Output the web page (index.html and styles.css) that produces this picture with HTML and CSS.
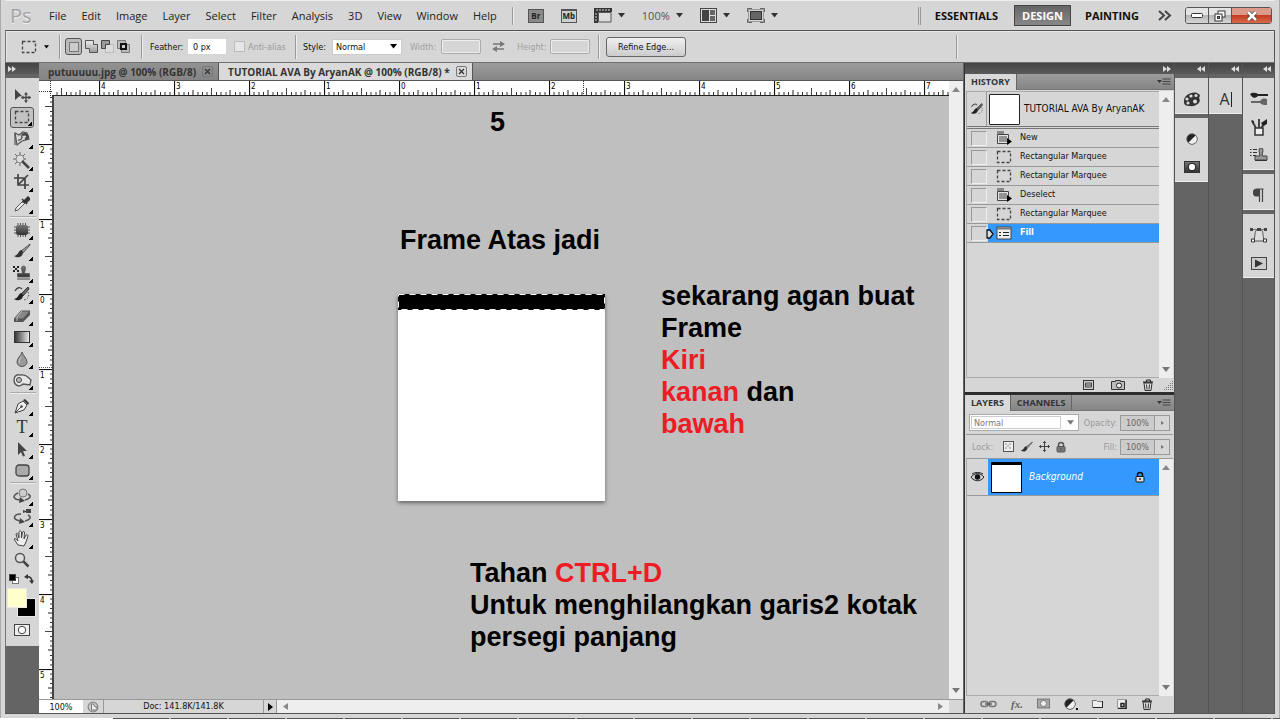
FILE: index.html
```html
<!DOCTYPE html>
<html lang="en">
<head>
<meta charset="utf-8">
<title>TUTORIAL AVA By AryanAK</title>
<link rel="stylesheet" href="styles.css">
</head>
<body>
<svg class="defs" aria-hidden="true">
  <defs>
    <linearGradient id="gdark" x1="0" y1="0" x2="0" y2="1"><stop offset="0" stop-color="#777"/><stop offset="1" stop-color="#333"/></linearGradient>
    <linearGradient id="glight" x1="0" y1="0" x2="0" y2="1"><stop offset="0" stop-color="#eee"/><stop offset="1" stop-color="#999"/></linearGradient>
    <linearGradient id="gside" x1="0" y1="0" x2="1" y2="0"><stop offset="0" stop-color="#333"/><stop offset="1" stop-color="#eee"/></linearGradient>
    <symbol id="marquee" viewBox="0 0 16 14"><rect x="1.500" y="1.500" width="13" height="11" fill="none" stroke="#444" stroke-dasharray="3 2" stroke-width="1.300"/></symbol>
    <symbol id="caret" viewBox="0 0 7 5"><path d="M0 0h7L3.500 4.500z" fill="currentColor"/></symbol>
    <symbol id="menu" viewBox="0 0 14 8"><path d="M0 2h5L2.500 5z" fill="#333"/><path d="M5.500 1h8M5.500 3.500h8M5.500 6h8" stroke="#444" stroke-width="1"/></symbol>
    <symbol id="right" viewBox="0 0 8 6"><path d="M0 0l4 3-4 3zM4 0l4 3-4 3z" fill="#ddd"/></symbol>
    <symbol id="left" viewBox="0 0 8 6"><path d="M4 0L0 3l4 3zM8 0L4 3l4 3z" fill="#ddd"/></symbol>
    <symbol id="brush" viewBox="0 0 18 16"><path d="M17 1L8 8l2 2 7-8z" fill="#999" stroke="#444" stroke-width=".8"/><path d="M9 7c-4 0-3 5-8 6 3 2 8 2 9-3z" fill="#333"/></symbol>
    <symbol id="histbrush" viewBox="0 0 18 16"><path d="M15 1L8 8l2 2 6-7z" fill="#666" stroke="#333"/><path d="M9 7c-4 0-3 5-8 6 3 2 8 2 9-3z" fill="#222"/><path d="M2 5c2-4 5-4 7-2" fill="none" stroke="#444" stroke-width="1.300"/><path d="M15 6c2 4 0 7-4 8" fill="none" stroke="#555" stroke-dasharray="1.500 1.500"/></symbol>
    <symbol id="trash" viewBox="0 0 12 12"><path d="M2 4h8l-1 7.500H3z" fill="#ddd" stroke="#333"/><path d="M1 3.200h10M4 3l1-2h3l1 2" fill="none" stroke="#222" stroke-width="1.200"/><path d="M4.500 5.500l.5 5M7.500 5.500l-.5 5" stroke="#333"/></symbol>
    <symbol id="lock" viewBox="0 0 10 12"><path d="M2.500 6V4a2.500 2.500 0 015 0v2" fill="none" stroke="currentColor" stroke-width="1.500"/><rect x="1" y="5.500" width="8" height="5.500" rx="1" fill="var(--body)" stroke="currentColor"/><path d="M5 7v2" stroke="currentColor" stroke-width="1.300"/></symbol>
    <symbol id="quick" viewBox="0 0 16 12"><rect x=".5" y=".5" width="15" height="11" fill="#eee" stroke="#444"/><circle cx="8" cy="6" r="3.700" fill="#fff" stroke="#444"/></symbol>
    <symbol id="mask" viewBox="0 0 16 12"><rect x=".5" y=".5" width="15" height="11" fill="url(#gdark)" stroke="#333"/><circle cx="8" cy="6" r="3.800" fill="#fff" stroke="#111"/></symbol>
    <symbol id="adjust" viewBox="0 0 12 12"><circle cx="6" cy="6" r="5.200" fill="#222" stroke="#555"/><path d="M9.500 2.500a4.900 4.900 0 01-7 7z" fill="#eee"/></symbol>
    <symbol id="command" viewBox="0 0 16 14"><path d="M1.500 3.500h11v9h-11z" fill="#e4e4e4" stroke="#444"/><path d="M1 0h7v3H1z" fill="#888"/><path d="M3 6h8M3 8h8M3 10h8" stroke="#444"/><path d="M11 7v7l5-3.500z" fill="#000"/></symbol>
    <symbol id="up" viewBox="0 0 8 5"><path d="M0 5h8L4 0z" fill="#888"/></symbol>
    <symbol id="down" viewBox="0 0 8 5"><path d="M0 0h8L4 5z" fill="#777"/></symbol>
  </defs>
</svg>

<div class="app">
  <header class="menubar">
    <div class="logo">Ps</div>
    <nav class="menus">
      <button>File</button><button>Edit</button><button>Image</button><button>Layer</button><button>Select</button><button>Filter</button><button>Analysis</button><button>3D</button><button>View</button><button>Window</button><button>Help</button>
    </nav>
    <span class="divider tall"></span>
    <div class="launch">
      <button class="badge" aria-label="Bridge">Br</button>
      <button class="badge mb" aria-label="Mini Bridge">Mb</button>
      <button aria-label="View extras"><svg width="18" height="15" viewBox="0 0 18 15"><path d="M0 0h18v4H4v11H0z" fill="#333"/><path d="M3 1v2M6 1v2M9 1v2M12 1v2M15 1v2M1 6h2M1 9h2M1 12h2" stroke="#ddd"/><path d="M4.500 4.500h12.500v9.500H4.500z" fill="#ddd" stroke="#555"/></svg><svg class="caret"><use href="#caret"/></svg></button>
      <button class="zoomlevel" aria-label="Zoom level"><span>100%</span><svg class="caret"><use href="#caret"/></svg></button>
      <button aria-label="Arrange documents"><svg width="17" height="15" viewBox="0 0 17 15"><rect x=".5" y=".5" width="16" height="14" fill="#ddd" stroke="#444"/><path d="M2 2h7v11H2z" fill="#444"/><path d="M10 2h5v5h-5zM10 8h5v5h-5z" fill="#666"/></svg><svg class="caret"><use href="#caret"/></svg></button>
      <button aria-label="Screen mode"><svg width="18" height="15" viewBox="0 0 18 15"><rect x="3.500" y="3.500" width="11" height="8" fill="#666" stroke="#333"/><path d="M1 4V1h4M13 1h4v3M1 11v3h4M13 14h4v-3" fill="none" stroke="#444" stroke-width="1.500"/><rect x="1.500" y="1.500" width="15" height="12" fill="none" stroke="#999"/></svg><svg class="caret"><use href="#caret"/></svg></button>
    </div>
    <div class="workspaces">
      <button>ESSENTIALS</button><button class="on">DESIGN</button><button>PAINTING</button>
      <button class="more" aria-label="More workspaces"><svg width="14" height="11" viewBox="0 0 14 11"><path d="M1 1l5 4.500L1 10M7 1l5 4.500L7 10" fill="none" stroke="#444" stroke-width="2"/></svg></button>
    </div>
    <div class="winctl">
      <button aria-label="Minimize"><svg width="12" height="6" viewBox="0 0 12 6"><rect x=".5" y=".5" width="11" height="4" rx="1" fill="#fff" stroke="#333"/></svg></button>
      <button aria-label="Restore"><svg width="12" height="12" viewBox="0 0 12 12"><rect x="4" y="1" width="7" height="6" fill="#fff" stroke="#333"/><rect x="1" y="4" width="7" height="7" fill="#fff" stroke="#333"/><rect x="3.500" y="6.500" width="2" height="2" fill="#888" stroke="#333"/></svg></button>
      <button class="close" aria-label="Close"><svg width="12" height="10" viewBox="0 0 12 10"><path d="M2 1l8 8M10 1L2 9" stroke="#444" stroke-width="4"/><path d="M2 1l8 8M10 1L2 9" stroke="#fff" stroke-width="2.500"/></svg></button>
    </div>
  </header>

  <div class="options">
    <span class="vgrip"></span>
    <button class="preset" aria-label="Tool preset"><svg width="16" height="14"><use href="#marquee"/></svg><svg class="caret small"><use href="#caret"/></svg></button>
    <span class="divider"></span>
    <div class="modes">
      <button class="on" aria-label="New selection"><svg width="12" height="12" viewBox="0 0 12 12"><rect x="1.500" y="1.500" width="9" height="9" fill="#ccc" stroke="#777"/></svg></button>
      <button aria-label="Add to selection"><svg width="13" height="13" viewBox="0 0 13 13"><path d="M.5.500h8v4h4v8h-8v-4h-4z" fill="url(#glight)" stroke="#555"/></svg></button>
      <button aria-label="Subtract from selection"><svg width="13" height="13" viewBox="0 0 13 13"><rect x="4.500" y="4.500" width="8" height="8" fill="#ddd" stroke="#bbb"/><path d="M.5.500h8v4h-4v4h-4z" fill="#999" stroke="#444"/></svg></button>
      <button aria-label="Intersect with selection"><svg width="13" height="13" viewBox="0 0 13 13"><path d="M.5.500h8v8h-8zM4.500 4.500h8v8h-8z" fill="#bbb" stroke="#777"/><path d="M4 4h5v5H4z" fill="#ccc" stroke="#111" stroke-width="2"/></svg></button>
    </div>
    <span class="divider"></span>
    <label class="feather"><span>Feather:</span><input value="0 px"></label>
    <label class="anti"><input type="checkbox" disabled><span>Anti-alias</span></label>
    <span class="divider"></span>
    <label class="style"><span>Style:</span><span class="pick"><select><option>Normal</option></select><svg class="caret arrow"><use href="#caret"/></svg></span></label>
    <label class="dim wide"><span>Width:</span><input disabled></label>
    <svg class="swap" width="13" height="11" viewBox="0 0 13 11"><path d="M1 3h9M12 8H3" stroke="#777" stroke-width="1.500"/><path d="M8 0l5 3-5 3zM5 5L0 8l5 3z" fill="#777"/></svg>
    <label class="dim high"><span>Height:</span><input disabled></label>
    <span class="divider"></span>
    <button class="refine">Refine Edge...</button>
    <span class="divider last"></span>
  </div>

  <main class="work">
    <aside class="tools">
      <div class="strip"><svg class="chev"><use href="#right"/></svg></div>
      <div class="toolbox">
        <span class="grip"></span>
        <div class="group six">
          <button aria-label="Move"><svg width="18" height="16" viewBox="0 0 18 16"><path d="M2 1l7 7-3 .5L2 12z" fill="#444"/><path d="M13 5v9M8.500 9.500h9" stroke="#444" stroke-width="1.300"/><path d="M13 4l2 2.500h-4zM13 15l2-2.500h-4zM8 9.500l2.500-2v4zM18 9.500l-2.500-2v4z" fill="#444"/></svg></button>
          <button class="fly on" aria-label="Rectangular marquee"><svg width="16" height="14"><use href="#marquee"/></svg></button>
          <button class="fly" aria-label="Lasso"><svg width="18" height="16" viewBox="0 0 18 16"><path d="M2 2l4 2 4-3 4 1 2 6-7 2-5 4z" fill="none" stroke="#555" stroke-width="1.200"/><path d="M2 2v12M5 9a3 3 0 003-5" fill="none" stroke="#555" stroke-width="1.200"/><path d="M9 4c5-3 8 3 3 4" fill="none" stroke="#444" stroke-width="2.500"/></svg></button>
          <button class="fly" aria-label="Quick selection"><svg width="18" height="17" viewBox="0 0 18 17"><circle cx="7" cy="7" r="4" fill="#ddd" stroke="#888"/><path d="M7 0v3M7 11v3M0 7h3M11 7h2M2 2l2 2M12 2l-2 2M2 12l2-2" stroke="#666"/><path d="M9 9l7 7" stroke="#444" stroke-width="2.500"/></svg></button>
          <button class="fly" aria-label="Crop"><svg width="16" height="16" viewBox="0 0 16 16"><path d="M4 0v11h11M0 4h11v11M5 10l9-9" fill="none" stroke="#444" stroke-width="1.700"/></svg></button>
          <button class="fly" aria-label="Eyedropper"><svg width="16" height="16" viewBox="0 0 16 16"><path d="M1 15l1-3 7-7 2 2-7 7z" fill="#eee" stroke="#555"/><path d="M8 3l5 5M9 6l5-5 2 2-4 4z" stroke="#333" stroke-width="1.500" fill="#333"/></svg></button>
        </div>
        <hr>
        <div class="group eight">
          <button class="fly" aria-label="Patch"><svg width="16" height="14" viewBox="0 0 16 14"><path d="M4 0v14M6.500 0v14M9 0v14M11.500 0v14M0 4h16M0 7h16M0 10h16" stroke="#555"/><rect x="2" y="2" width="12" height="10" rx="2.500" fill="url(#gdark)"/></svg></button>
          <button class="fly" aria-label="Brush"><svg width="18" height="16"><use href="#brush"/></svg></button>
          <button class="fly" aria-label="Clone stamp"><svg width="18" height="16" viewBox="0 0 18 16"><path d="M8.500 3a2 2 0 014 0l-1 5.500h5v3.500h-12V8.500h5z" fill="url(#gdark)" stroke="#555" stroke-width=".8"/><path d="M4 14h13" stroke="#777" stroke-width="1.500"/><path d="M0 1h2v2H0zM4 1h2v2H4zM2 3h2v2H2zM0 5h2v2H0zM4 5h2v2H4z" fill="#222"/></svg></button>
          <button class="fly" aria-label="History brush"><svg width="18" height="16"><use href="#histbrush"/></svg></button>
          <button class="fly" aria-label="Eraser"><svg width="18" height="14" viewBox="0 0 18 14"><path d="M8 2h9l-7 8H1z" fill="#888" stroke="#555"/><path d="M1 10h9v3H1zM10 10l7-8v4l-7 7z" fill="#555"/><path d="M9 2L4 8v4" fill="none" stroke="#bbb"/></svg></button>
          <button class="fly" aria-label="Gradient"><svg width="16" height="12" viewBox="0 0 16 12"><rect x=".5" y=".5" width="15" height="11" fill="url(#gside)" stroke="#333"/></svg></button>
          <button class="fly" aria-label="Blur"><svg width="12" height="16" viewBox="0 0 12 16"><path d="M6 1c1 4 5 6 5 10a5 4.500 0 01-10 0c0-4 4-6 5-10z" fill="#999" stroke="#555"/><path d="M5 6c-2 3-2 5-2 6" fill="none" stroke="#ccc"/></svg></button>
          <button class="fly" aria-label="Dodge"><svg width="19" height="15" viewBox="0 0 19 15"><path d="M1 7c0-4 3-6 6-5 5-1 8 2 11 5l-1 5-7-1c-4 4-9 1-9-4z" fill="#e6e6e6" stroke="#555" stroke-width="1.300"/><circle cx="6" cy="7" r="2.500" fill="#bbb" stroke="#444"/></svg></button>
        </div>
        <hr>
        <div class="group four">
          <button class="fly" aria-label="Pen"><svg width="16" height="16" viewBox="0 0 16 16"><path d="M1 15L4 6l5-3 4 4-3 5z" fill="#eee" stroke="#444"/><path d="M1 15l6-6" stroke="#444"/><circle cx="7.500" cy="8.500" r="1.300" fill="#444"/><path d="M9 2l2-1 4 4-1 2z" fill="#333"/></svg></button>
          <button class="fly type" aria-label="Type">T</button>
          <button class="fly" aria-label="Path selection"><svg width="12" height="16" viewBox="0 0 12 16"><path d="M2 1l9 9H7l2 5-2 .5L5 11l-3 3z" fill="#444"/></svg></button>
          <button class="fly" aria-label="Shape"><svg width="15" height="13" viewBox="0 0 15 13"><rect x="1" y="1" width="13" height="11" rx="3" fill="#aaa" stroke="#444" stroke-width="1.300"/></svg></button>
        </div>
        <hr>
        <div class="group four">
          <button class="fly" aria-label="3D rotate"><svg width="19" height="16" viewBox="0 0 19 16"><path d="M5 5c-7 3-4 7 3 7M12 12c5-1 7-4 3-6" fill="none" stroke="#555" stroke-width="1.600"/><circle cx="10" cy="5" r="4" fill="#ccc" stroke="#777"/><path d="M7 9l5 4-6 2z" fill="#444"/></svg></button>
          <button class="fly" aria-label="3D camera"><svg width="19" height="16" viewBox="0 0 19 16"><path d="M8 5c-8 0-9 6-1 7M12 12c5-1 7-4 3-6" fill="none" stroke="#555" stroke-width="1.600"/><path d="M7 9l5 4-6 2zM10 1l3 1V0h5v4h-5V3l-3 1z" fill="#444"/></svg></button>
          <button class="fly" aria-label="Hand"><svg width="18" height="17" viewBox="0 0 18 17"><path d="M5 15L1 9c1-1 2 0 4 2L3 4c1-2 2 0 3 4V2c1-2 2-1 2.500 0V8l1-6c1-1 2-1 2 1l-.5 6 2-4c1-1 2 0 2 1l-2 6-2 4z" fill="#eee" stroke="#444"/></svg></button>
          <button aria-label="Zoom"><svg width="16" height="16" viewBox="0 0 16 16"><circle cx="6" cy="6" r="4.500" fill="#ddd" stroke="#555" stroke-width="1.500"/><path d="M9.500 9.500l5 5" stroke="#444" stroke-width="2.500"/></svg></button>
        </div>
        <div class="mini">
          <button aria-label="Default colors"><svg width="10" height="10" viewBox="0 0 10 10"><rect x="3.500" y="3.500" width="6" height="6" fill="#fff" stroke="#777"/><rect x=".5" y=".5" width="6" height="6" fill="#000" stroke="#444"/></svg></button>
          <button aria-label="Swap colors"><svg width="10" height="10" viewBox="0 0 10 10"><path d="M2 3c4-1 6 1 6 5" fill="none" stroke="#333" stroke-width="1.500"/><path d="M0 3l4-3v5zM8 10L5 6.500h5z" fill="#333"/></svg></button>
        </div>
        <div class="swatches"><button class="bg" aria-label="Background color"></button><button class="fg" aria-label="Foreground color"></button></div>
        <button class="quick" aria-label="Quick mask"><svg width="16" height="12"><use href="#quick"/></svg></button>
      </div>
    </aside>

    <section class="doc">
      <div class="doctabs">
        <div class="doctab"><span>putuuuuu.jpg @ 100% (RGB/8)</span><button aria-label="Close putuuuuu.jpg"><svg width="11" height="11" viewBox="0 0 11 11"><path d="M3 3l5 5M8 3L3 8" stroke="#333" stroke-width="1.300"/></svg></button></div>
        <div class="doctab on"><span>TUTORIAL AVA By AryanAK @ 100% (RGB/8) *</span><button aria-label="Close TUTORIAL AVA"><svg width="11" height="11" viewBox="0 0 11 11"><path d="M3 3l5 5M8 3L3 8" stroke="#333" stroke-width="1.300"/></svg></button></div>
      </div>
      <div class="view">
        <svg class="hruler" width="100%" height="15">
          <defs><pattern id="hp" x="-15" y="0" width="75" height="15" patternUnits="userSpaceOnUse"><path d="M.5 0v15" stroke="#111" stroke-width="1.200"/><path d="M37.500 7v8" stroke="#444"/><path d="M19 9v6M56 9v6" stroke="#222"/><path d="M5 11v4M10 11v4M14.500 11v4M24 11v4M28.500 11v4M33 11v4M42.500 11v4M47 11v4M52 11v4M61.500 11v4M66 11v4M71 11v4" stroke="#333"/></pattern></defs>
          <rect x="14" width="100%" height="15" fill="url(#hp)"/>
          <path d="M0 10.500h14M11.500 0v15M544.500 0v14" stroke="#333" stroke-dasharray="1 1"/>
          <path d="M13 14.500h2000" stroke="#222"/>
          <g><text x="62" y="8">4</text><text x="137" y="8">3</text><text x="212" y="8">2</text><text x="287" y="8">1</text><text x="362" y="8">0</text><text x="437" y="8">1</text><text x="512" y="8">2</text><text x="587" y="8">3</text><text x="662" y="8">4</text><text x="737" y="8">5</text><text x="812" y="8">6</text><text x="887" y="8">7</text></g>
        </svg>
        <div class="vscroll"><svg width="8" height="5"><use href="#up"/></svg><svg width="8" height="5"><use href="#down"/></svg></div>
        <svg class="vruler" width="15" height="100%">
          <defs><pattern id="vp" x="0" y="48" width="15" height="75" patternUnits="userSpaceOnUse"><path d="M0 .5h15" stroke="#111" stroke-width="1.200"/><path d="M6 37.500h9" stroke="#444"/><path d="M9 19h6M9 56h6" stroke="#222"/><path d="M11 5h4M11 10h4M11 14.500h4M11 24h4M11 28.500h4M11 33h4M11 42.500h4M11 47h4M11 52h4M11 61.500h4M11 66h4M11 71h4" stroke="#333"/></pattern></defs>
          <rect width="15" height="100%" fill="url(#vp)"/><path d="M14 0v2000" stroke="#444" stroke-width="2"/><path d="M0 271.500h14" stroke="#555" stroke-dasharray="1 1"/>
          <g><text x="1" y="57">2</text><text x="1" y="132">1</text><text x="1" y="207">0</text><text x="1" y="282">1</text><text x="1" y="357">2</text><text x="1" y="432">3</text><text x="1" y="507">4</text><text x="1" y="582">5</text></g>
        </svg>
        <div class="canvas">
          <p class="note n1">5</p>
          <p class="note n2">Frame Atas jadi</p>
          <div class="page"><svg width="100%" height="17"><rect width="100%" height="16"/><rect x=".5" y=".5" width="206" height="15" fill="none" stroke="#fff" stroke-dasharray="6 5"/></svg></div>
          <p class="note n3">sekarang agan buat<br>Frame<br><em>Kiri</em><br><em>kanan</em> dan<br><em>bawah</em></p>
          <p class="note n4">Tahan <em>CTRL+D</em><br>Untuk menghilangkan garis2 kotak<br>persegi panjang</p>
        </div>
      </div>
      <footer class="status">
        <input value="100%" aria-label="Zoom">
        <button class="clock" aria-label="Version"><svg width="12" height="12" viewBox="0 0 12 12"><circle cx="6" cy="6" r="4.800" fill="#ccc" stroke="#888" stroke-width="1.300"/><path d="M4.500 3h2l1.500 3h2v3H4.500z" fill="#eee" stroke="#777"/></svg></button>
        <span class="info">Doc: 141.8K/141.8K</span>
        <button class="play" aria-label="Status menu"><svg width="5" height="8" viewBox="0 0 5 8"><path d="M0 0l5 4-5 4z"/></svg></button>
        <div class="hscroll"><svg width="5" height="7" viewBox="0 0 5 7"><path d="M5 0v7L0 3.500z" fill="#888"/></svg><svg width="5" height="7" viewBox="0 0 5 7"><path d="M0 0v7l5-3.500z" fill="#888"/></svg></div>
        <span class="corner"></span>
      </footer>
    </section>

    <aside class="panels">
      <div class="strip end"><svg class="chev"><use href="#right"/></svg></div>
      <section class="panel history">
        <div class="ptabs"><button class="on">HISTORY</button><svg class="pmenu"><use href="#menu"/></svg></div>
        <div class="pbody">
          <div class="rows">
            <div class="snapshot"><span class="src"><svg width="14" height="14"><use href="#histbrush"/></svg></span><span class="thumb"></span><span>TUTORIAL AVA By AryanAK</span></div>
            <div class="row"><i></i><svg width="16" height="14"><use href="#command"/></svg><span>New</span></div>
            <div class="row"><i></i><svg width="16" height="14"><use href="#marquee"/></svg><span>Rectangular Marquee</span></div>
            <div class="row"><i></i><svg width="16" height="14"><use href="#marquee"/></svg><span>Rectangular Marquee</span></div>
            <div class="row"><i></i><svg width="16" height="14"><use href="#command"/></svg><span>Deselect</span></div>
            <div class="row"><i></i><svg width="16" height="14"><use href="#marquee"/></svg><span>Rectangular Marquee</span></div>
            <div class="row on"><i></i><svg width="16" height="14" viewBox="0 0 16 14"><rect x="1" y="1" width="14" height="12" fill="#eee" stroke="#444"/><path d="M1 2.500h14" stroke="#777" stroke-width="2"/><path d="M3 6.500h2M7 6.500h6M3 9.500h2M7 9.500h6" stroke="#222"/></svg><span>Fill</span><svg class="marker" width="8" height="10" viewBox="0 0 8 10"><path d="M1 1h3l3 4-3 4H1z" fill="#ddd" stroke="#111" stroke-width="1.300"/></svg></div>
          </div>
          <div class="vscroll"><svg width="8" height="5"><use href="#up"/></svg><svg width="8" height="5"><use href="#down"/></svg></div>
        </div>
        <div class="pfoot">
          <button aria-label="New document from state"><svg width="11" height="10" viewBox="0 0 11 10"><rect x=".5" y=".5" width="10" height="9" fill="#ccc" stroke="#333"/><path d="M2.500 3h6v4h-6zM3 5h5" fill="none" stroke="#444"/></svg></button>
          <button aria-label="New snapshot"><svg width="14" height="10" viewBox="0 0 14 10"><path d="M.5 1.500h4v-1h5v1h4v8H.5z" fill="#bbb" stroke="#333"/><circle cx="8" cy="5.500" r="2.500" fill="#eee" stroke="#222"/></svg></button>
          <button aria-label="Delete state"><svg width="12" height="12"><use href="#trash"/></svg></button>
          <svg width="10" height="10" viewBox="0 0 10 10"><path d="M1 9.500h9M3 7.500h7M5 5.500h5M7 3.500h3M9 1.500h1" stroke="#777" stroke-dasharray="1 1"/></svg>
        </div>
      </section>
      <section class="panel layers">
        <div class="ptabs"><button class="on">LAYERS</button><button>CHANNELS</button><svg class="pmenu"><use href="#menu"/></svg></div>
        <div class="lrow">
          <span class="blend"><select aria-label="Blend mode"><option>Normal</option></select><svg width="7" height="5"><use href="#down"/></svg></span>
          <label class="pct"><span>Opacity:</span><input value="100%"><b></b></label>
        </div>
        <div class="lrow locks">
          <span class="lbl">Lock:</span>
          <button aria-label="Lock transparency"><svg width="11" height="11" viewBox="0 0 11 11"><rect x=".5" y=".5" width="10" height="10" fill="#eee" stroke="#555"/><path d="M2 2h2v2H2zM6 2h2v2H6zM4 4h2v2H4zM2 6h2v2H2zM6 6h2v2H6z" fill="#bbb"/></svg></button>
          <button aria-label="Lock pixels"><svg width="13" height="12"><use href="#brush"/></svg></button>
          <button aria-label="Lock position"><svg width="11" height="11" viewBox="0 0 11 11"><path d="M5.500 0v11M0 5.500h11M4 2l1.500-1.500L7 2M4 9l1.500 1.500L7 9M2 4L.5 5.500 2 7M9 4l1.500 1.500L9 7" fill="none" stroke="#444"/></svg></button>
          <button class="grey" aria-label="Lock all"><svg width="10" height="12"><use href="#lock"/></svg></button>
          <label class="pct"><span>Fill:</span><input value="100%"><b></b></label>
        </div>
        <div class="pbody">
          <div class="rows">
            <div class="layer"><span class="eye"><svg width="13" height="10" viewBox="0 0 13 10"><path d="M0 5c3-4 9-5 13 0-3 5-10 5-13 0z" fill="#ccc" stroke="#222"/><circle cx="6.500" cy="5" r="2.700" fill="#111"/><path d="M1 2c3-2 8-2 11 0" fill="none" stroke="#222"/></svg></span><div class="pick-on"><span class="thumb art"></span><em>Background</em><svg class="llock" width="10" height="12"><use href="#lock"/></svg></div></div>
          </div>
          <div class="vscroll"><svg width="8" height="5"><use href="#up"/></svg><svg width="8" height="5"><use href="#down"/></svg></div>
        </div>
        <div class="pfoot wide">
          <button aria-label="Link layers"><svg width="17" height="8" viewBox="0 0 17 8"><rect x="1" y="1.500" width="7" height="5" rx="2.500" fill="none" stroke="#777" stroke-width="1.500"/><rect x="9" y="1.500" width="7" height="5" rx="2.500" fill="none" stroke="#777" stroke-width="1.500"/><path d="M5 4h7" stroke="#555" stroke-width="1.300"/></svg></button>
          <button class="fx" aria-label="Layer style">fx.</button>
          <button aria-label="Add mask"><svg width="13" height="11" viewBox="0 0 16 12"><rect x=".5" y=".5" width="15" height="11" fill="#aaa" stroke="#666"/><circle cx="8" cy="6" r="3.800" fill="#eee" stroke="#666"/></svg></button>
          <button aria-label="Adjustment layer"><svg width="14" height="12" viewBox="0 0 14 12"><circle cx="6" cy="6" r="5.200" fill="#222" stroke="#555"/><path d="M9.500 2.500a4.900 4.900 0 01-7 7z" fill="#eee"/><path d="M12 10h2v2h-2z"/></svg></button>
          <button aria-label="New group"><svg width="11" height="9" viewBox="0 0 11 9"><path d="M.5 1.500h4l1 1h5v6H.5z" fill="#eee" stroke="#777"/><path d="M10.500 2v6.500H1" fill="none" stroke="#222"/></svg></button>
          <button aria-label="New layer"><svg width="10" height="10" viewBox="0 0 10 10"><path d="M.5.500h9v9h-9z" fill="#eee" stroke="#999"/><path d="M4 4.500h3v3H4zM9 1v8.500H1" fill="none" stroke="#222" stroke-width="1.500"/></svg></button>
          <button aria-label="Delete layer"><svg width="12" height="12"><use href="#trash"/></svg></button>
        </div>
      </section>
    </aside>

    <aside class="dock">
      <div class="strip end"><svg class="chev"><use href="#left"/></svg></div>
      <div class="cell"><span class="grip"></span><button class="pad" aria-label="Color"><svg width="18" height="15" viewBox="0 0 18 15"><path d="M1 10C0 4 8-1 14 1c5 2 2 4 2 5 3 4-3 9-9 8-4 0-6-1-6-4z" fill="#333"/><g fill="#ddd"><circle cx="8" cy="4" r="1.600"/><circle cx="13" cy="3.500" r="1.600"/><circle cx="4" cy="7" r="1.600"/><circle cx="5" cy="11" r="1.500"/><circle cx="12" cy="9.500" r="2"/></g></svg></button></div>
      <div class="cell"><span class="grip"></span><button aria-label="Adjustments"><svg width="12" height="12"><use href="#adjust"/></svg></button><button aria-label="Masks"><svg width="16" height="12"><use href="#mask"/></svg></button></div>
    </aside>
    <aside class="dock">
      <div class="strip end"><svg class="chev"><use href="#left"/></svg></div>
      <div class="cell"><span class="grip"></span><button class="char pad" aria-label="Character">A</button></div>
    </aside>
    <aside class="dock">
      <div class="strip end"><svg class="chev"><use href="#left"/></svg></div>
      <div class="cell"><span class="grip"></span>
        <button aria-label="Brush presets"><svg width="18" height="14" viewBox="0 0 18 14"><path d="M0 2c2-1 4-2 8 0h10v2H8c-3 3-6 2-8-2z" fill="#222"/><path d="M1 9h9c3-4 6-2 7-2v6c-3 0-5 0-7-2H1z" fill="#666"/></svg></button>
        <button aria-label="Brushes"><svg width="16" height="18" viewBox="0 0 16 18"><path d="M5 10L1 3M8 10V1M10 10l5-6" stroke="#444" stroke-width="2"/><path d="M10 5l6-4v5l-4 2zM0 2l3 1v3z" fill="#222"/><rect x="4" y="10" width="8" height="7" fill="#eee" stroke="#333" stroke-width="1.500"/></svg></button>
        <button aria-label="Clone source"><svg width="18" height="14" viewBox="0 0 18 14"><path d="M0 1.500h1.500M3 1.500h4M0 4.500h1.500M3 4.500h4M0 7.500h1.500M3 7.500h3" stroke="#333"/><path d="M9 2a2 2 0 014 0l-1 6h5v4H5V8h5z" fill="#999" stroke="#444"/><path d="M5 12.500h12" stroke="#333"/></svg></button>
      </div>
      <div class="cell"><span class="grip"></span><button class="pad" aria-label="Paragraph"><svg width="11" height="14" viewBox="0 0 11 14"><path d="M10.500 1H4a3.500 3.500 0 000 7h2V1M6.500 1v13M9.500 1v13" fill="#444" stroke="#444" stroke-width="1.200"/></svg></button></div>
      <div class="cell"><span class="grip"></span>
        <button aria-label="Paths"><svg width="18" height="16" viewBox="0 0 18 16"><path d="M3 14C6 11 4 3 7 3h4c3 0 1 8 4 11z" fill="#ddd" stroke="#555"/><path d="M1 2.500h16" stroke="#777"/><path d="M0 1h3v3H0zM7 1h4v3H7zM14 1h3v3h-3z" fill="#444"/><path d="M1.500 12h3v3h-3zM13.500 12h3v3h-3z" fill="#fff" stroke="#333"/></svg></button>
        <button aria-label="Actions"><svg width="16" height="13" viewBox="0 0 16 13"><rect x=".5" y=".5" width="15" height="12" fill="#ccc" stroke="#444"/><path d="M4 2.500l8 4-8 4z" fill="#333"/></svg></button>
      </div>
    </aside>
  </main>
</div>
<div class="desktop"></div>
</body>
</html>
```
FILE: styles.css
```css
* { box-sizing: border-box; }
html, body { height: 100%; margin: 0; }
body {
  display: flex; flex-direction: column; background: #fff; color: #111;
  font: 9px/12px "DejaVu Sans Condensed", "Open Sans", sans-serif; overflow: hidden;
}
button, input, select { font: inherit; color: inherit; margin: 0; padding: 0; border: 0; background: none; border-radius: 0; }
button { display: flex; align-items: center; justify-content: center; }
svg { display: block; flex: none; }
p { margin: 0; }
em { font-style: inherit; }
.defs { position: absolute; width: 0; height: 0; }

.app { flex: 1; min-height: 0; display: flex; flex-direction: column; background: #d6d6d6; border: solid #aaa; border-width: 0 1px; padding: 0 4px 4px; }
.desktop { flex: none; height: 9px; background: repeating-linear-gradient(90deg, #555 0 56px, #bbb 56px 58px) 113px 0/100% 1px no-repeat #fff; }

/* menu bar */
.menubar { display: flex; align-items: center; height: 30px; flex: none; border-top: 1px solid #eee; padding-left: 5px; }
.logo { width: 31px; font: 20px/26px "Open Sans", sans-serif; color: #a2a2a2; text-shadow: 0 1px #f4f4f4; }
.menus { display: flex; font: 11px/16px "Open Sans", sans-serif; color: #222; }
.menus button { padding: 0 7px 0 8px; }
.divider { width: 2px; height: 24px; background: #999; border-right: 1px solid #eee; flex: none; }
.divider.tall { height: 18px; margin: 0 14px 0 8px; }
.launch { display: flex; align-items: center; gap: 17px; }
.launch button { gap: 6px; }
.caret { width: 7px; height: 5px; color: #333; }
.caret.small { width: 5px; height: 4px; color: #000; }
.caret.arrow { color: #000; }
.launch .badge { width: 16px; height: 14px; background: #8a8a8a; border: 1px solid #555; font: bold 8px/10px "Open Sans", sans-serif; color: #222; }
.launch .badge.mb { background: #d0d0d0; border-top-width: 2px; }
.zoomlevel { font: 11px/16px "Open Sans", sans-serif; color: #555; }
.workspaces { margin-left: auto; display: flex; align-items: center; border-left: 3px double #999; padding-left: 6px; height: 18px; font: bold 11px/18px "Open Sans", sans-serif; }
.workspaces button { padding: 0 8px; height: 21px; }
.workspaces .on { background: linear-gradient(#666, #888); color: #fff; border: 1px solid #444; margin: 0 6px 0 8px; padding: 0 7px; }
.workspaces .more { padding: 0 13px 0 11px; }
.winctl { display: flex; height: 17px; margin-right: 3px; border: 1px solid #555; border-radius: 3px; overflow: hidden; }
.winctl button { width: 23px; background: linear-gradient(#e4e4e4 50%, #b5b5b5 50%, #d5d5d5); border-right: 1px solid #555; }
.winctl .close { width: 39px; border: 0; background: linear-gradient(#dd9a8a 45%, #c33b22 50%, #d86a4c); }

/* options bar */
.options { display: flex; align-items: center; height: 33px; flex: none; border: 1px solid #555; border-left-color: #777; border-bottom-color: #707070; padding-left: 3px; box-shadow: inset 1px 1px #e8e8e8; }
.vgrip { width: 4px; height: 22px; background: radial-gradient(#999 35%, transparent 40%) 0 0/2px 2px; margin-right: 8px; }
.preset { gap: 7px; margin-right: 10px; }
.modes { display: flex; align-items: center; gap: 3px; margin: 0 11px 0 4px; }
.modes .on { width: 17px; height: 17px; border: 1px solid #555; border-radius: 3px; background: #bbb; }
.options label { display: flex; align-items: center; }
.feather { margin-left: 7px; }
.feather span { width: 38px; }
.feather input { width: 38px; height: 15px; background: #fff; padding-left: 5px; }
.anti { margin: 0 9px 0 8px; color: #999; gap: 3px; }
.anti input { appearance: none; width: 11px; height: 11px; border: 1px solid #bbb; background: #e6e6e6; }
.anti span { width: 38px; white-space: nowrap; }
.style { margin-left: 6px; }
.style > span:first-child { width: 29px; }
.pick { display: flex; align-items: center; width: 70px; height: 16px; background: #fff; border: 1px solid #ccc; padding-right: 4px; }
.pick select { appearance: none; flex: 1; padding-left: 3px; }
.dim { color: #a0a0a0; }
.dim input { width: 40px; height: 15px; border: 1px solid #aaa; background: #d6d6d6; border-radius: 2px; box-shadow: inset 0 0 0 1px #eee; }
.dim.wide { margin-left: 8px; }
.dim.wide span { width: 31px; }
.swap { margin: 0 12px 0 11px; }
.dim.high { margin-right: 8px; }
.dim.high span { width: 33px; }
.refine { width: 80px; height: 20px; margin-left: 6px; border: 1px solid #666; border-radius: 3px; background: linear-gradient(#f0f0f0, #ccc); }
.last { margin-left: auto; margin-right: 316px; }

/* work area */
.work { flex: 1; min-height: 0; display: flex; background: #646464; border: solid #555; border-width: 0 1px 1px 0; }
.strip { height: 11px; flex: none; display: flex; align-items: center; padding: 0 3px; background: linear-gradient(#444, #5a5a5a); }
.strip.end { justify-content: flex-end; }
.chev { width: 8px; height: 6px; }
.grip { display: block; width: 26px; height: 4px; margin: 4px auto 3px; background: radial-gradient(#999 35%, transparent 40%) 0 0/2px 2px; flex: none; }
.tools { width: 34px; flex: none; }
.toolbox { background: #d6d6d6; border-left: 1px solid #777; padding-bottom: 9px; }
.toolbox hr { width: 26px; height: 2px; margin: 1px auto; border: 0; background: #aaa; border-bottom: 1px solid #eee; }
.group { display: grid; grid-auto-rows: 1fr; justify-items: center; }
.six { height: 130px; }
.eight { height: 172px; }
.four { height: 86px; }
.group button { position: relative; width: 24px; margin-right: 1px; }
.group .on { border: 1px solid #555; border-radius: 3px; background: #c2c2c2; }
.fly::after { content: ""; position: absolute; right: 1px; bottom: 1px; width: 4px; height: 4px; background: linear-gradient(135deg, transparent 50%, #000 50%); }
.group .type { font: 18px/20px "Liberation Serif", serif; color: #333; }
.mini { display: flex; justify-content: space-between; align-items: flex-start; padding: 3px 5px 0 3px; height: 17px; }
.swatches { position: relative; height: 31px; }
.swatches button { position: absolute; width: 20px; height: 20px; border: 1px solid #e8e8e8; }
.swatches .fg { left: 1px; top: 0; background: #ffc; }
.swatches .bg { left: 11px; top: 10px; width: 19px; height: 19px; background: #000; }
.quick { margin: 4px auto 0; height: 14px; padding-right: 1px; }

.doc { flex: 1; min-width: 0; display: flex; flex-direction: column; background: #d6d6d6; border-right: 1px solid #666; }
.doctabs { display: flex; height: 18px; flex: none; background: linear-gradient(#9c9c9c, #858585); border-bottom: 1px solid #555; font: bold 10px/16px "Open Sans", sans-serif; }
.doctab { display: flex; align-items: center; gap: 6px; padding: 0 5px 0 9px; border-right: 1px solid #555; color: #333; background: linear-gradient(#929292, #848484); white-space: nowrap; }
.doctab.on { background: #dadada; }
.doctab button { width: 11px; height: 11px; border: 1px solid #777; border-radius: 2px; }
.view { flex: 1; min-height: 0; display: grid; grid-template: 15px 1fr / 15px 1fr 14px; }
.hruler { grid-column: 1 / 3; background: #fff; }
.hruler, .vruler { overflow: hidden; font: 8px "DejaVu Sans Condensed", "Open Sans", sans-serif; }
.vruler { background: #fff; min-height: 0; }
.view .vscroll { grid-column: 3; grid-row: 1 / 3; }
.vscroll { width: 14px; flex: none; background: #eee; display: flex; flex-direction: column; justify-content: space-between; align-items: center; padding: 6px 0; }
.canvas { position: relative; background: #bfbfbf; overflow: hidden; }
.note { position: absolute; white-space: nowrap; font: bold 27px/32px "Liberation Sans", Arial, sans-serif; color: #000; }
.note em { color: #ed1c24; }
.n1 { left: 436px; top: 10px; }
.n2 { left: 346px; top: 128px; }
.n3 { left: 607px; top: 184px; }
.n4 { left: 416px; top: 461px; }
.page { position: absolute; left: 344px; top: 198px; width: 207px; height: 207px; background: #fff; box-shadow: 0 2px 4px #666; }
.status { display: flex; align-items: stretch; height: 14px; flex: none; border-top: 1px solid #999; }
.status > input { width: 44px; background: #fff; text-align: center; }
.clock { width: 21px; border-right: 1px solid #999; }
.info { width: 160px; text-align: center; border-right: 1px solid #999; line-height: 13px; }
.play { width: 13px; border-right: 1px solid #999; }
.hscroll { flex: 1; background: #eee; display: flex; justify-content: space-between; align-items: center; padding: 0 6px; }
.corner { width: 14px; }

/* panels */
.panels { width: 210px; flex: none; display: flex; flex-direction: column; background: #2d2d2d; border-left: 1px solid #333; }
.panel { display: flex; flex-direction: column; background: #d6d6d6; }
.history { height: 318px; flex: none; margin-bottom: 3px; }
.layers { flex: 1; min-height: 0; }
.ptabs { display: flex; align-items: stretch; height: 16px; flex: none; background: linear-gradient(#9c9c9c, #858585); border-bottom: 1px solid #777; font: bold 9px/14px "Open Sans", sans-serif; }
.ptabs button { padding: 0 6px; border-right: 1px solid #666; color: #333; }
.ptabs .on { background: #d9d9d9; margin-bottom: -1px; }
.pmenu { width: 14px; height: 8px; margin: 4px 3px 0 auto; }
.pbody { flex: 1; min-height: 0; display: flex; margin: 1px 1px 0; }
.layers .pbody { margin-top: 0; }
.rows { flex: 1; border: solid #aaa; border-width: 1px 0 1px 1px; }
.layers .rows { border-top: 0; }
.snapshot { display: flex; align-items: center; height: 37px; border-bottom: 3px double #777; gap: 4px; white-space: nowrap; font-size: 10px; }
.src { width: 20px; height: 100%; display: grid; place-items: center; border-right: 1px solid #999; }
.thumb { width: 31px; height: 31px; background: #fff; border: 1px solid #222; border-radius: 1px; flex: none; }
.snapshot .thumb { margin-left: -2px; }
.row { position: relative; display: flex; align-items: center; height: 19px; border-bottom: 1px solid #999; }
.row i { width: 16px; height: 15px; margin: 0 1px 0 4px; border: 1px solid #999; border-right-color: #eee; border-bottom-color: #eee; }
.row svg { margin-left: 8px; }
.row span { margin-left: 8px; padding-bottom: 2px; }
.row.on { color: #fff; font-weight: bold; background: linear-gradient(90deg, #d6d6d6 21px, #39f 21px); }
.row .marker { position: absolute; left: 11px; top: 5px; }
.pfoot { display: flex; align-items: center; justify-content: flex-end; height: 14px; flex: none; gap: 17px; padding-right: 1px; }
.pfoot > svg { margin-left: -8px; }
.pfoot.wide { gap: 14px; height: 17px; padding: 0 21px 2px 0; }
.fx { font: italic bold 11px/12px "Liberation Serif", serif; color: #666; }
.lrow { display: flex; align-items: center; height: 24px; flex: none; margin: 0 1px; padding: 0 3px; border-bottom: 1px solid #999; color: #999; }
.blend { display: flex; align-items: center; width: 110px; height: 17px; background: #fff; border: 1px solid #aaa; padding: 1px 4px 1px 1px; gap: 6px; }
.blend select { appearance: none; flex: 1; min-width: 0; height: 13px; border: 1px solid #ccc; padding-left: 2px; color: #777; }
.pct { display: flex; align-items: center; margin-left: auto; }
.pct input { width: 35px; height: 16px; border: 1px solid #999; color: #666; text-align: center; background: #ccc; margin-left: 3px; }
.pct b { width: 15px; height: 16px; border: 1px solid #999; border-left: 0; display: grid; place-items: center; }
.pct b::before { content: ""; border: solid transparent; border-width: 2px 0 2px 3px; border-left-color: #777; }
.locks { gap: 6px; }
.lbl { width: 28px; padding-left: 3px; }
.grey { color: #555; --body: #777; }
.layer { display: flex; height: 37px; border-bottom: 1px solid #999; }
.eye { width: 21px; display: grid; place-items: center; }
.pick-on { flex: 1; display: flex; align-items: center; background: #39f; color: #fff; padding: 0 14px 0 3px; font-size: 10px; }
.pick-on em { font-style: italic; margin-left: 7px; }
.art { border: 1px solid #000; border-top-width: 3px; }
.llock { margin-left: auto; color: #111; --body: #ddd; }

.dock { width: 34px; flex: none; border-left: 1px solid #555; }
.dock:last-child { width: 32px; }
.cell { background: #d6d6d6; border-bottom: 1px solid #eee; margin-bottom: 2px; }
.cell button { width: 100%; height: 28px; }
.cell .pad { height: 28px; }
.char { font: 16px/20px "Open Sans", sans-serif; color: #333; }
.char::after { content: ""; width: 1px; height: 15px; background: #222; margin-left: 1px; }
```
